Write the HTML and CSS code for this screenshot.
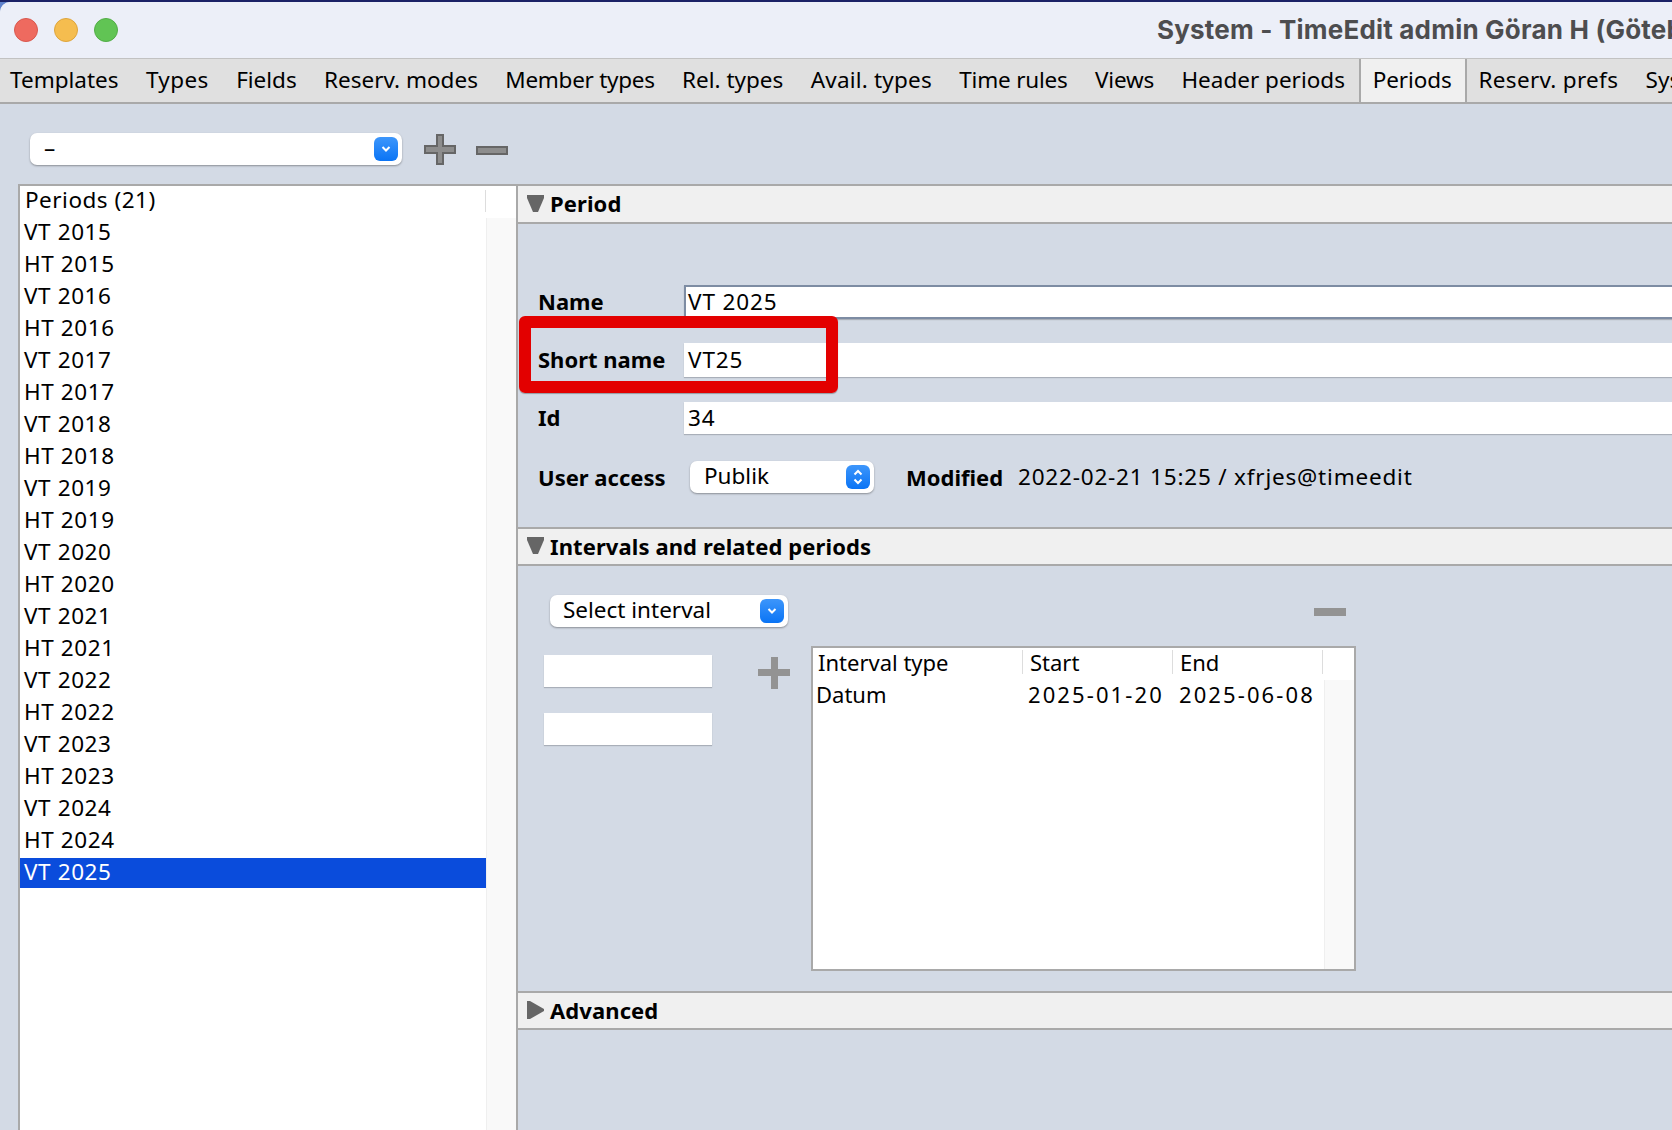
FILE: index.html
```html
<!DOCTYPE html>
<html lang="en">
<head>
<meta charset="utf-8">
<title>System - TimeEdit admin</title>
<link rel="stylesheet" href="styles.css">
</head>
<body>
<div class="window">
  <header class="titlebar">
    <div class="lights"><span class="light red"></span><span class="light yellow"></span><span class="light green"></span></div>
    <div class="title">System - TimeEdit admin Göran H (Göteborgs universitet)</div>
  </header>
  <nav class="tabs">
    <span class="tab">Templates</span><span class="tab tab-types">Types</span><span class="tab">Fields</span><span class="tab">Reserv. modes</span><span class="tab tab-tight">Member types</span><span class="tab">Rel. types</span><span class="tab tab-avail">Avail. types</span><span class="tab tab-views">Time rules</span><span class="tab tab-views">Views</span><span class="tab">Header periods</span><span class="tab active">Periods</span><span class="tab tab-wide">Reserv. prefs</span><span class="tab">System</span>
  </nav>
  <main class="main">
    <div class="toolbar">
      <div class="combo combo-top"><span class="combo-text">–</span>
        <span class="combo-btn"><svg width="12" height="10" viewBox="0 0 12 10"><path d="M2.5 3 6 6.5 9.5 3" fill="none" stroke="#fff" stroke-width="2"/></svg></span></div>
      <svg class="icon-plus" width="32" height="31" viewBox="0 0 32 31"><path d="M13 1h6v11h12v7H19v11h-6V19H1v-7h12z" fill="#8d8d8d" stroke="#666" stroke-width="2"/></svg>
      <svg class="icon-minus" width="32" height="9" viewBox="0 0 32 9"><rect x="1" y="1" width="30" height="7" fill="#8d8d8d" stroke="#666" stroke-width="2"/></svg>
    </div>
    <div class="split">
      <section class="list">
        <div class="list-head"><span>Periods (21)</span></div>
        <div class="list-body">
          <ul class="rows">
            <li>VT 2015</li><li>HT 2015</li><li>VT 2016</li><li>HT 2016</li><li>VT 2017</li><li>HT 2017</li><li>VT 2018</li><li>HT 2018</li><li>VT 2019</li><li>HT 2019</li><li>VT 2020</li><li>HT 2020</li><li>VT 2021</li><li>HT 2021</li><li>VT 2022</li><li>HT 2022</li><li>VT 2023</li><li>HT 2023</li><li>VT 2024</li><li>HT 2024</li><li class="selected">VT 2025</li>
          </ul>
          <div class="track"></div>
        </div>
      </section>
      <section class="panel">
        <h2 class="sec-head sec-first"><svg width="17" height="17" viewBox="0 0 17 17"><path d="M0 0h17v3l-6 14H6L0 3z" fill="#666"/></svg>Period</h2>
        <div class="form">
          <div class="frow r-name"><label class="lbl">Name</label><div class="field focused">VT 2025</div></div>
          <div class="frow r-short"><label class="lbl">Short name</label><div class="field">VT25</div></div>
          <div class="frow r-id"><label class="lbl">Id</label><div class="field field-id">34</div></div>
          <div class="frow r-access"><label class="lbl lbl-access">User access</label>
            <div class="combo combo-access"><span class="combo-text">Publik</span>
              <span class="combo-btn"><svg width="12" height="18" viewBox="0 0 12 18"><path d="M2.5 6.5 6 3l3.500 3.500M2.500 11.500 6 15l3.500-3.500" fill="none" stroke="#fff" stroke-width="2"/></svg></span></div>
            <b class="mod-label">Modified</b><span class="mod-value">2022-02-21 15:25 / xfrjes@timeedit</span>
          </div>
          <div class="redbox"></div>
        </div>
        <h2 class="sec-head"><svg width="17" height="17" viewBox="0 0 17 17"><path d="M0 0h17v3l-6 14H6L0 3z" fill="#666"/></svg>Intervals and related periods</h2>
        <div class="intervals">
          <div class="int-top">
            <div class="combo combo-int"><span class="combo-text">Select interval</span>
              <span class="combo-btn"><svg width="12" height="10" viewBox="0 0 12 10"><path d="M2.500 3 6 6.500 9.500 3" fill="none" stroke="#fff" stroke-width="2"/></svg></span></div>
            <svg class="int-minus" width="32" height="8" viewBox="0 0 32 8"><rect width="32" height="8" fill="#939393"/></svg>
          </div>
          <div class="int-main">
            <div class="int-fields"><div class="blank"></div><div class="blank"></div></div>
            <svg class="int-plus" width="32" height="32" viewBox="0 0 32 32"><path d="M13 0h7v12h12v7H20v13h-7V19H0v-7h13z" fill="#939393"/></svg>
            <div class="table">
              <div class="thead"><span>Interval type</span><span>Start</span><span>End</span></div>
              <div class="tbody">
                <div class="trow"><span class="c-type">Datum</span><span class="c-start">2025-01-20</span><span class="c-end">2025-06-08</span></div>
                <div class="track track-table"></div>
              </div>
            </div>
          </div>
        </div>
        <h2 class="sec-head"><svg width="17" height="18" viewBox="0 0 17 18"><path d="M0 0h3l14 8v2L3 18H0z" fill="#666"/></svg>Advanced</h2>
      </section>
    </div>
  </main>
</div>
</body>
</html>
```

FILE: styles.css
```css
* { box-sizing: border-box; }
html, body { margin: 0; padding: 0; height: 100%; overflow: hidden; }
body { background: linear-gradient(#1b2266 2px, #5f82cc 2px); font-family: "Noto Sans", "DejaVu Sans", sans-serif; font-size: 22.5px; color: #000; }

.window { width: 1672px; height: 1130px; display: flex; flex-direction: column; overflow: hidden; background: #d3dae5; margin-top: 2px; border-top-left-radius: 10px; }

.titlebar { height: 57px; flex: none; background: #eceff8; border-bottom: 1px solid #c2c2c2; display: flex; align-items: center; }
.lights { display: flex; gap: 16px; padding-left: 14px; flex: none; }
.light { width: 24px; height: 24px; border-radius: 50%; }
.red { background: #ee6a5f; border: 1px solid #d9584e; }
.yellow { background: #f5bd4f; border: 1px solid #dea53c; }
.green { background: #61c454; border: 1px solid #52ad46; }
.title { margin-left: 1039px; padding-bottom: 2px; white-space: nowrap; font-family: Inter, sans-serif; font-weight: 700; font-size: 26px; letter-spacing: 0.2px; color: #4d4d4f; }

.tabs { height: 45px; flex: none; display: flex; background: #e0e0e0; border-bottom: 2px solid #a9a9a9; white-space: nowrap; }
.tab { padding: 0 13.7px; line-height: 41px; }
.tab:first-child { padding-left: 10px; }
.tab-types { letter-spacing: 0.4px; }
.tab-tight { letter-spacing: -0.28px; }
.tab-avail { letter-spacing: 0.2px; }
.tab-wide { letter-spacing: 0.3px; }
.tab-views { letter-spacing: -0.2px; }
.tab.active { background: #f0f0f0; border-left: 2px solid #a9a9a9; border-right: 2px solid #a9a9a9; padding: 0 13px 0 12px; letter-spacing: -0.1px; }
.tab.active + .tab { padding-left: 12px; }

.main { flex: 1; min-height: 0; display: flex; flex-direction: column; }
.toolbar { height: 80px; flex: none; padding: 29px 0 0 30px; display: flex; align-items: flex-start; }
.icon-plus { margin: 1px 0 0 22px; flex: none; }
.icon-minus { margin: 13px 0 0 20px; flex: none; }

.combo { height: 32px; background: #fff; border-radius: 7px; box-shadow: 0 1px 2px rgba(0,0,0,.35); display: flex; align-items: center; justify-content: space-between; padding: 0 4px 0 14px; flex: none; }
.combo-text { line-height: 28px; padding-bottom: 2px; }
.combo-btn { width: 24px; height: 24px; border-radius: 6px; background: linear-gradient(#3d96fb, #0a74f5); display: flex; align-items: center; justify-content: center; flex: none; }
.combo-top { width: 372px; }
.combo-access { width: 184px; }
.combo-int { width: 238px; padding-left: 13px; }

.split { flex: 1; min-height: 0; margin-left: 18px; display: flex; border-top: 2px solid #a9a9a9; }

.list { width: 498px; flex: none; background: #fff; border-left: 2px solid #a9a9a9; display: flex; flex-direction: column; }
.list-head { height: 32px; flex: none; padding-left: 5px; line-height: 28px; letter-spacing: 0.5px; position: relative; }
.list-head::after { content: ""; position: absolute; left: 465px; top: 4px; width: 1px; height: 22px; background: #ddd; }
.list-body { flex: 1; min-height: 0; display: flex; }
.rows { list-style: none; margin: 0; padding: 0; width: 466px; flex: none; }
.rows li { height: 30px; margin-bottom: 2px; line-height: 28px; padding-left: 4px; letter-spacing: 0.6px; }
.rows li.selected { background: #0a4cdc; color: #fff; }
.track { flex: 1; background: #f9f9f9; border-left: 1px solid #efefef; }

.panel { flex: 1; min-width: 0; border-left: 2px solid #a9a9a9; display: flex; flex-direction: column; overflow: hidden; }
.sec-head { margin: 0; height: 39px; flex: none; display: flex; align-items: center; gap: 6px; padding: 0 0 2px 9px; font-size: 22px; font-weight: 700; letter-spacing: 0.1px; background: #f0f0f0; border-top: 2px solid #a9a9a9; border-bottom: 2px solid #a9a9a9; }
.sec-first { height: 38px; border-top: 0; }

.form { padding: 61px 0 34px 20px; position: relative; flex: none; }
.frow { display: flex; align-items: center; white-space: nowrap; height: 32px; }
.r-name, .r-short { height: 34px; }
.lbl { width: 146px; flex: none; font-weight: 700; font-size: 22px; line-height: 28px; padding-bottom: 3px; }
.field { flex: 1; height: 34px; background: #fff; box-shadow: 0 1px 1px #a9afb9; line-height: 33px; padding-left: 4px; letter-spacing: 0.9px; }
.field.focused { border-top: 2px solid #7d8ca3; border-left: 2px solid #7d8ca3; border-bottom: 2px solid #7d8ca3; padding-left: 2px; line-height: 29px; }
.field-id { height: 32px; line-height: 31px; }
.r-short { margin-top: 24px; }
.r-id { margin-top: 25px; }
.r-access { margin-top: 27px; }
.lbl-access { width: 152px; padding-bottom: 1px; }
.mod-label { margin-left: 32px; width: 112px; font-size: 22px; line-height: 28px; padding-bottom: 1px; }
.mod-value { letter-spacing: 0.8px; line-height: 28px; }
.redbox { position: absolute; left: 1px; top: 92px; width: 319px; height: 77px; border: 12px solid #e30000; border-radius: 6px; box-shadow: 0 1px 1px rgba(0,0,0,.3); }

.intervals { flex: none; padding: 29px 0 20px 0; }
.int-top { display: flex; align-items: center; padding-left: 32px; height: 32px; }
.int-minus { margin: 2px 0 0 526px; flex: none; }
.int-main { display: flex; align-items: flex-start; margin-top: 19px; padding-left: 26px; }
.int-fields { width: 168px; flex: none; display: flex; flex-direction: column; gap: 26px; margin-top: 9px; }
.blank { height: 32px; background: #fff; box-shadow: 0 1px 1px #a9afb9; }
.int-plus { margin: 11px 0 0 46px; flex: none; }
.table { width: 545px; height: 325px; margin-left: 21px; flex: none; background: #fff; border: 2px solid #a9a9a9; display: flex; flex-direction: column; font-size: 22px; }
.thead { height: 32px; flex: none; display: grid; grid-template-columns: 210px 150px 150px 30px; align-items: start; padding-top: 2px; }
.thead span { padding-left: 5px; height: 24px; line-height: 24px; border-right: 1px solid #ddd; }
.thead span:nth-child(2) { padding-left: 7px; }
.thead span:nth-child(3) { padding-left: 7px; }
.tbody { flex: 1; display: flex; min-height: 0; }
.trow { width: 511px; flex: none; height: 30px; display: grid; grid-template-columns: 210px 150px 150px; line-height: 28px; }
.c-type { padding-left: 3px; }
.c-start { padding-left: 5px; letter-spacing: 2.1px; }
.c-end { padding-left: 6px; letter-spacing: 2.1px; }
```
